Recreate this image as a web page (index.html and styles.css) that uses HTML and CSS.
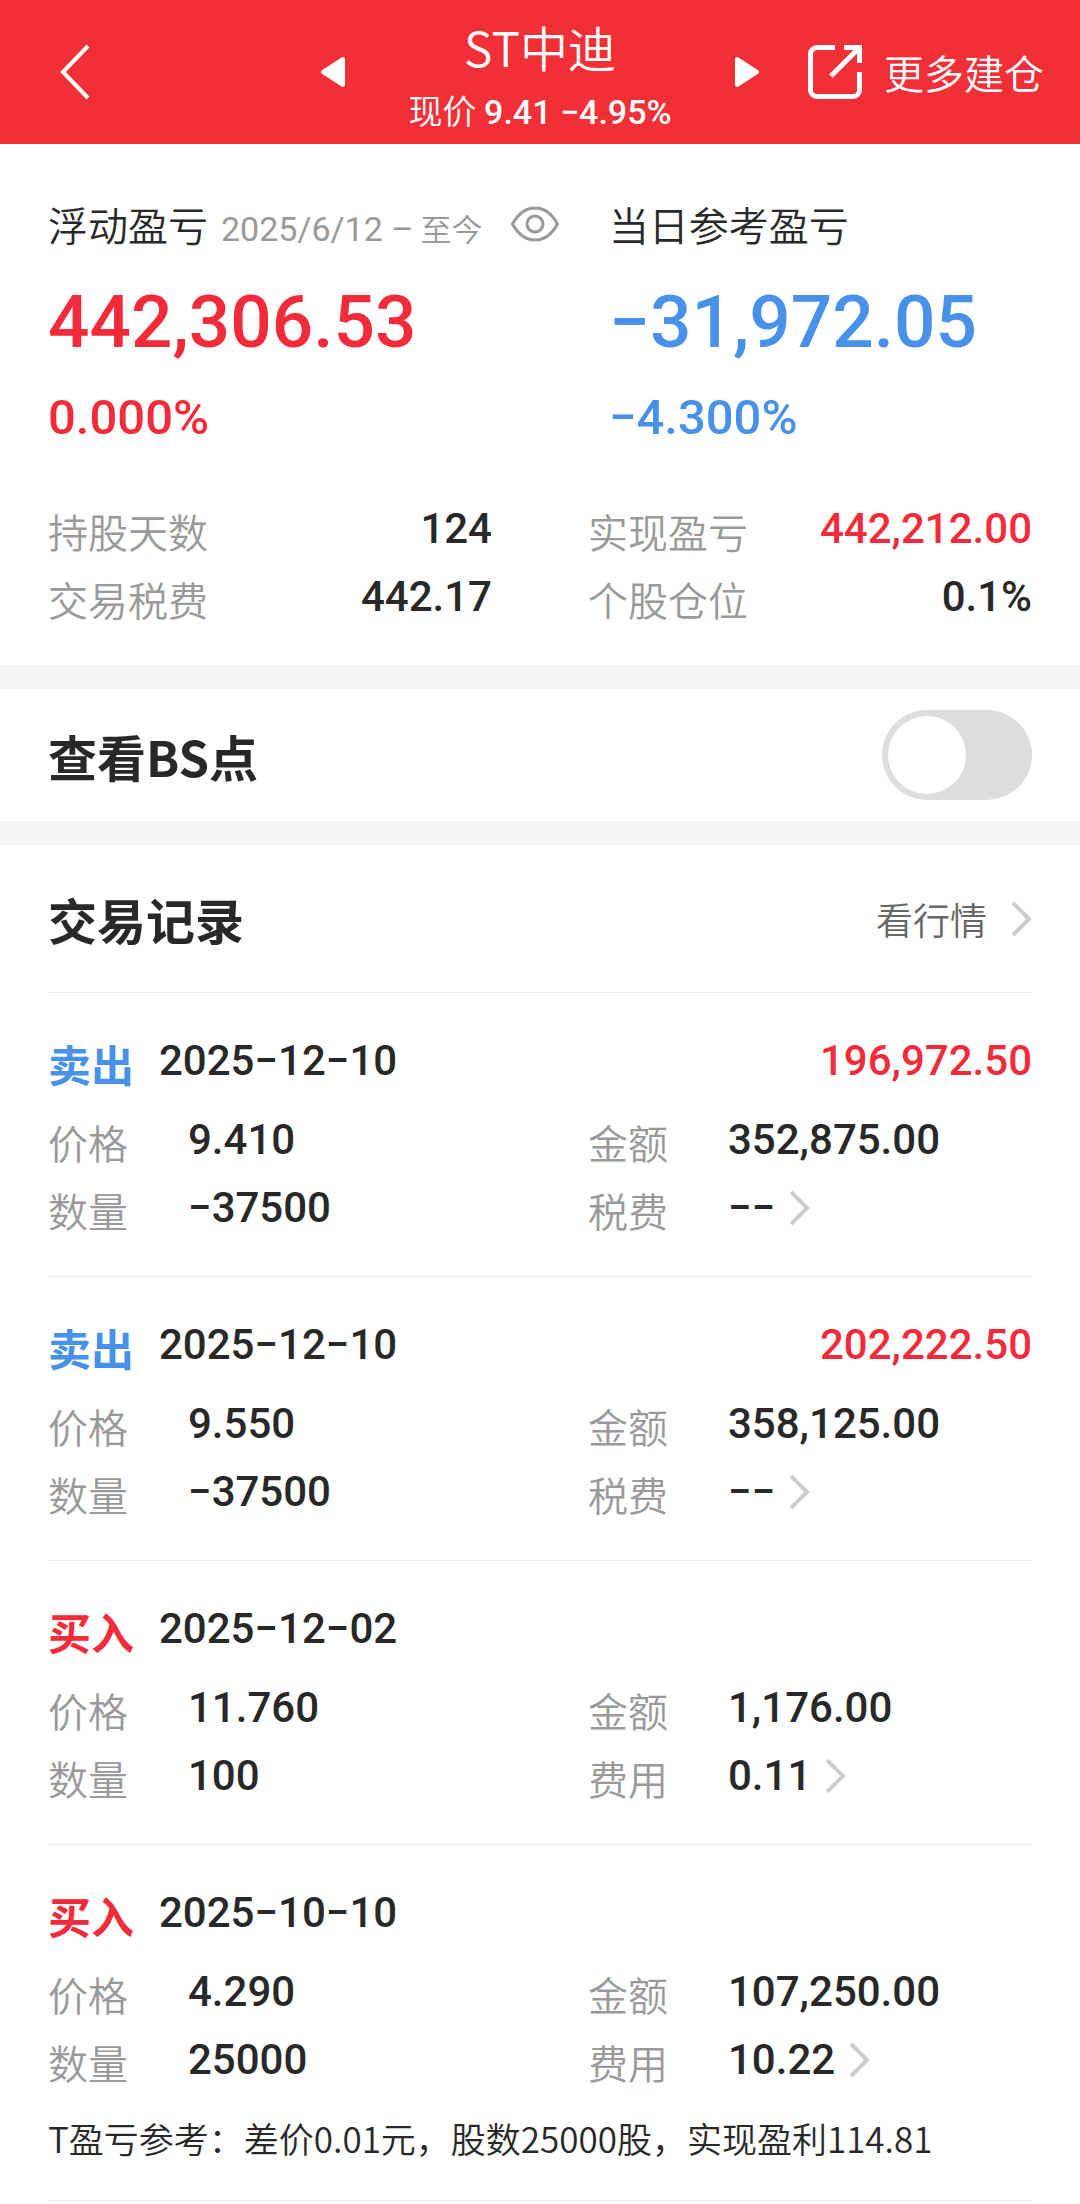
FILE: index.html
```html
<!DOCTYPE html>
<html lang="zh-CN">
<head>
<meta charset="utf-8">
<meta name="viewport" content="width=device-width, initial-scale=1">
<title>ST中迪</title>
<link rel="stylesheet" href="styles.css">
</head>
<body>
<header class="topbar">
  <button class="icon-button" type="button" aria-label="返回">
    <svg width="32" height="56" viewBox="0 0 32 56" fill="none" stroke="currentColor" stroke-width="4"><path d="M28 2 3 28l25 26"/></svg>
  </button>
  <div class="stock">
    <button class="icon-button" type="button" aria-label="上一只">
      <svg width="24" height="30" viewBox="0 0 24 30" fill="currentColor" stroke="currentColor" stroke-width="4" stroke-linejoin="round"><path d="M22 2v26L2 15z"/></svg>
    </button>
    <div class="stock-info">
      <h1 class="stock-name">ST中迪</h1>
      <p class="stock-price">现价 <b class="quote">9.41 −4.95%</b></p>
    </div>
    <button class="icon-button" type="button" aria-label="下一只">
      <svg width="24" height="30" viewBox="0 0 24 30" fill="currentColor" stroke="currentColor" stroke-width="4" stroke-linejoin="round"><path d="M2 2v26l20-13z"/></svg>
    </button>
  </div>
  <a class="more" href="#more">
    <svg width="54" height="54" viewBox="0 0 54 54" fill="none" stroke="currentColor" stroke-width="5"><path d="M27 2.500H9A6.500 6.500 0 0 0 2.500 9v36A6.500 6.500 0 0 0 9 51.500h36a6.500 6.500 0 0 0 6.500-6.500V27M36 2.500h15.500V18M51 3 23 31"/></svg>
    <span>更多建仓</span>
  </a>
</header>

<main>
  <section class="summary">
    <div class="profit">
      <div>
        <h2 class="profit-title">浮动盈亏 <span class="period"><span class="period-date">2025/6/12 –</span> 至今</span>
          <button class="icon-button eye" type="button" aria-label="隐藏金额">
            <svg width="48" height="36" viewBox="0 0 48 36" fill="none" stroke="currentColor" stroke-width="3"><path d="M1.500 18C7 8 14 2 24 2s17 6 22.500 16C41 28 34 34 24 34S7 28 1.500 18z"/><circle cx="24" cy="18" r="8"/></svg>
          </button>
        </h2>
        <p class="amount up">442,306.53</p>
        <p class="rate up">0.000%</p>
      </div>
      <div>
        <h2 class="profit-title">当日参考盈亏</h2>
        <p class="amount down">−31,972.05</p>
        <p class="rate down">−4.300%</p>
      </div>
    </div>
    <dl class="pairs stats">
      <div class="pair"><dt>持股天数</dt><dd>124</dd></div>
      <div class="pair"><dt>实现盈亏</dt><dd class="up">442,212.00</dd></div>
      <div class="pair"><dt>交易税费</dt><dd>442.17</dd></div>
      <div class="pair"><dt>个股仓位</dt><dd>0.1%</dd></div>
    </dl>
  </section>

  <section class="band switch-row">
    <label class="heading" for="bs">查看BS点</label>
    <input class="switch" id="bs" type="checkbox" role="switch">
  </section>

  <section class="band records">
    <div class="records-head">
      <h2 class="heading">交易记录</h2>
      <a class="market" href="#market">看行情
        <svg class="chevron" width="21" height="36" viewBox="0 0 21 36"><path d="M2 2l16 16L2 34"/></svg>
      </a>
    </div>

    <article class="record">
      <header class="record-head"><h3 class="side down">卖出</h3><time class="num" datetime="2025-12-10">2025−12−10</time><span class="num gain up">196,972.50</span></header>
      <dl class="pairs">
        <div class="pair"><dt>价格</dt><dd>9.410</dd></div>
        <div class="pair"><dt>金额</dt><dd>352,875.00</dd></div>
        <div class="pair"><dt>数量</dt><dd>−37500</dd></div>
        <div class="pair"><dt>税费</dt><dd><a class="fee" href="#fee1">−− <svg class="chevron" width="21" height="36" viewBox="0 0 21 36"><path d="M2 2l16 16L2 34"/></svg></a></dd></div>
      </dl>
    </article>

    <article class="record">
      <header class="record-head"><h3 class="side down">卖出</h3><time class="num" datetime="2025-12-10">2025−12−10</time><span class="num gain up">202,222.50</span></header>
      <dl class="pairs">
        <div class="pair"><dt>价格</dt><dd>9.550</dd></div>
        <div class="pair"><dt>金额</dt><dd>358,125.00</dd></div>
        <div class="pair"><dt>数量</dt><dd>−37500</dd></div>
        <div class="pair"><dt>税费</dt><dd><a class="fee" href="#fee2">−− <svg class="chevron" width="21" height="36" viewBox="0 0 21 36"><path d="M2 2l16 16L2 34"/></svg></a></dd></div>
      </dl>
    </article>

    <article class="record">
      <header class="record-head"><h3 class="side up">买入</h3><time class="num" datetime="2025-12-02">2025−12−02</time></header>
      <dl class="pairs">
        <div class="pair"><dt>价格</dt><dd>11.760</dd></div>
        <div class="pair"><dt>金额</dt><dd>1,176.00</dd></div>
        <div class="pair"><dt>数量</dt><dd>100</dd></div>
        <div class="pair"><dt>费用</dt><dd><a class="fee" href="#fee3">0.11 <svg class="chevron" width="21" height="36" viewBox="0 0 21 36"><path d="M2 2l16 16L2 34"/></svg></a></dd></div>
      </dl>
    </article>

    <article class="record">
      <header class="record-head"><h3 class="side up">买入</h3><time class="num" datetime="2025-10-10">2025−10−10</time></header>
      <dl class="pairs">
        <div class="pair"><dt>价格</dt><dd>4.290</dd></div>
        <div class="pair"><dt>金额</dt><dd>107,250.00</dd></div>
        <div class="pair"><dt>数量</dt><dd>25000</dd></div>
        <div class="pair"><dt>费用</dt><dd><a class="fee" href="#fee4">10.22 <svg class="chevron" width="21" height="36" viewBox="0 0 21 36"><path d="M2 2l16 16L2 34"/></svg></a></dd></div>
      </dl>
      <p class="note">T盈亏参考：差价0.01元，股数25000股，实现盈利114.81</p>
    </article>
  </section>
</main>
</body>
</html>
```
FILE: styles.css
```css
* {
  box-sizing: border-box;
}

body,
h1,
h2,
h3,
p,
dl,
dd {
  margin: 0;
}

body {
  background: #fff;
  color: #282828;
  font-family: "Noto Sans CJK SC", sans-serif;
  font-size: 40px;
  font-weight: 350;
}

h1,
h2 {
  font-weight: inherit;
}

a {
  color: inherit;
  text-decoration: none;
}

svg {
  display: block;
  flex: none;
}

.icon-button {
  display: block;
  padding: 0;
  border: 0;
  background: none;
  color: inherit;
}

.up {
  color: #f22b3a;
}

.down {
  color: #4891e8;
}

/* Top bar */
.topbar {
  display: grid;
  grid-template-columns: 1fr 438px 1fr;
  align-items: center;
  height: 144px;
  padding: 0 36px;
  background: #f12f37;
  color: #fff;
}

.topbar > .icon-button {
  padding-left: 24px;
  justify-self: start;
}

.stock {
  display: flex;
  align-items: center;
  justify-content: space-between;
}

.stock-info {
  padding-top: 14px;
  text-align: center;
}

.stock-name {
  font-size: 48px;
  line-height: 64px;
}

.stock-price {
  font-size: 34px;
  line-height: 64px;
}

.quote {
  font-family: Roboto, sans-serif;
  font-weight: 500;
}

.more {
  display: flex;
  align-items: center;
  justify-content: flex-end;
  gap: 22px;
}

/* Profit summary */
.summary {
  padding: 56px 48px 32px;
}

.profit {
  display: grid;
  grid-template-columns: 57% 43%;
}

.profit-title {
  display: flex;
  align-items: baseline;
  height: 48px;
  font-size: 40px;
  line-height: 48px;
}

.period {
  margin-left: 13px;
  color: #999;
  font-size: 31px;
}

.period-date {
  font-family: Roboto, sans-serif;
  font-size: 34px;
  font-weight: 400;
}

.eye {
  align-self: center;
  margin-left: 29px;
  color: #999;
}

.amount,
.rate,
.num,
dd {
  font-family: Roboto, sans-serif;
  font-weight: 500;
}

.amount {
  margin-top: 26px;
  font-size: 73px;
  line-height: 96px;
}

.rate {
  margin-top: 16px;
  font-size: 49px;
  line-height: 64px;
}

/* Label and value grid */
.pairs {
  display: grid;
  grid-template-columns: 1fr 1fr;
  column-gap: 96px;
}

.stats {
  margin-top: 47px;
}

.pair {
  display: flex;
  height: 68px;
}

dt {
  flex: none;
  width: 140px;
  color: #999;
  line-height: 68px;
}

dd {
  font-size: 42px;
  line-height: 64px;
}

.stats .pair {
  justify-content: space-between;
}

.stats dt {
  width: auto;
}

.band {
  border-top: 24px solid #f4f4f4;
}

.heading {
  font-size: 49px;
  font-weight: 700;
}

/* Switch */
.switch-row {
  display: flex;
  align-items: center;
  justify-content: space-between;
  height: 156px;
  padding: 0 48px;
}

.switch {
  appearance: none;
  width: 150px;
  height: 90px;
  margin: 0;
  padding: 6px;
  border-radius: 45px;
  background: #ddd;
}

.switch::before {
  content: "";
  display: block;
  width: 78px;
  height: 78px;
  border-radius: 50%;
  background: #fff;
}

.switch:checked {
  background: #f12f37;
}

.switch:checked::before {
  margin-left: auto;
}

/* Records */
.records {
  padding: 0 48px;
}

.records-head,
.record {
  border-bottom: 1px solid #ebebeb;
}

.records-head {
  display: flex;
  align-items: center;
  justify-content: space-between;
  height: 148px;
}

.market {
  display: flex;
  align-items: center;
  gap: 24px;
  color: #666;
  font-size: 37px;
}

.chevron {
  fill: none;
  stroke: #ccc;
  stroke-width: 4;
}

.record {
  padding: 40px 0 32px;
}

.record-head {
  display: flex;
  height: 60px;
  margin-bottom: 15px;
}

.side {
  margin-right: 25px;
  font-size: 43px;
  font-weight: 700;
  line-height: 60px;
}

.num {
  font-size: 42px;
  line-height: 56px;
}

.gain {
  margin-left: auto;
}

.fee {
  display: flex;
  align-items: center;
  gap: 14px;
}

.note {
  margin: 18px 0 6px;
  font-size: 35px;
  line-height: 48px;
}
```
